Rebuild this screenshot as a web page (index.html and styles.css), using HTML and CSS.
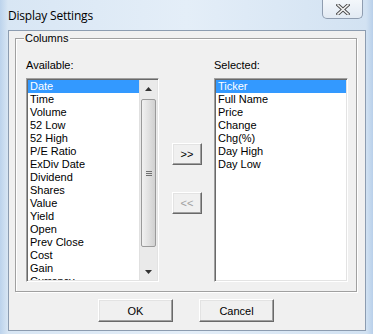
FILE: index.html
```html
<!DOCTYPE html>
<html lang="en">
<head>
  <meta charset="UTF-8">
  <title>Display Settings</title>
  <link rel="stylesheet" href="styles.css">
</head>
<body>
  <div class="frame">
    <div class="titlebar">
      <span class="title">Display Settings</span>
      <div class="close-btn">
        <svg width="14" height="11" viewBox="0 0 14 11">
          <path d="M2 1 L12 10 M12 1 L2 10" stroke="#4a4a4a" stroke-width="3.4" stroke-linecap="square"/>
          <path d="M2 1 L12 10 M12 1 L2 10" stroke="#f4f4f4" stroke-width="1.6" stroke-linecap="square"/>
        </svg>
      </div>
    </div>

    <div class="client">
      <div class="group">
        <span class="legend">Columns</span>
        <div class="columns">
          <div class="col">
            <div class="label">Available:</div>
            <div class="listbox left">
              <ul class="items">
                <li class="selected">Date</li>
                <li>Time</li>
                <li>Volume</li>
                <li>52 Low</li>
                <li>52 High</li>
                <li>P/E Ratio</li>
                <li>ExDiv Date</li>
                <li>Dividend</li>
                <li>Shares</li>
                <li>Value</li>
                <li>Yield</li>
                <li>Open</li>
                <li>Prev Close</li>
                <li>Cost</li>
                <li>Gain</li>
                <li>Currency</li>
              </ul>
              <div class="scrollbar">
                <div class="arrow">
                  <svg width="7" height="4" viewBox="0 0 7 4"><path d="M3.5 0 L7 4 L0 4 Z" fill="#333"/></svg>
                </div>
                <div class="track">
                  <div class="thumb">
                    <span class="grip"></span>
                    <span class="grip"></span>
                    <span class="grip"></span>
                  </div>
                </div>
                <div class="arrow">
                  <svg width="7" height="4" viewBox="0 0 7 4"><path d="M0 0 L7 0 L3.5 4 Z" fill="#333"/></svg>
                </div>
              </div>
            </div>
          </div>

          <div class="movers">
            <button class="btn small">&gt;&gt;</button>
            <button class="btn small" disabled>&lt;&lt;</button>
          </div>

          <div class="col">
            <div class="label">Selected:</div>
            <div class="listbox">
              <ul class="items">
                <li class="selected">Ticker</li>
                <li>Full Name</li>
                <li>Price</li>
                <li>Change</li>
                <li>Chg(%)</li>
                <li>Day High</li>
                <li>Day Low</li>
              </ul>
            </div>
          </div>
        </div>
      </div>

      <div class="actions">
        <button class="btn wide">OK</button>
        <button class="btn wide">Cancel</button>
      </div>
    </div>
  </div>
</body>
</html>
```

FILE: styles.css
```css
html, body {
  margin: 0;
  padding: 0;
}

body {
  width: 373px;
  height: 334px;
  overflow: hidden;
  font-family: "Liberation Sans", Arial, sans-serif;
  font-size: 11px;
  color: #000;
}

.frame {
  width: 373px;
  height: 334px;
  box-sizing: border-box;
  padding: 0 7px 3px 8px;
  background:
    linear-gradient(to right, #bcd3ec 0, #d8e6f4 8px, #e4eef8 50%, #d2e2f2 366px, #b9d0ea 373px);
  display: flex;
  flex-direction: column;
}

.titlebar {
  height: 31px;
  display: flex;
  align-items: flex-start;
}

.title {
  font-family: "Open Sans", "Noto Sans", sans-serif;
  font-size: 12px;
  line-height: 16px;
  margin-top: 8px;
  color: #000;
  letter-spacing: -0.2px;
}

.close-btn {
  margin-left: auto;
  margin-right: 3px;
  width: 41px;
  height: 19px;
  box-sizing: border-box;
  border: 1px solid #8f9db0;
  border-top: none;
  border-radius: 0 0 5px 5px;
  background: linear-gradient(to bottom, #f3f7fb, #e2eaf3);
  display: flex;
  align-items: center;
  justify-content: center;
}

.client {
  flex: 1;
  background: #f0f0f0;
  border: 1px solid #8c9cb0;
  padding: 7px 8px 8px 6px;
  display: flex;
  flex-direction: column;
}

.group {
  position: relative;
  height: 254px;
  box-sizing: border-box;
  border: 1px solid #a0a0a0;
  box-shadow: inset 1px 1px 0 #fff, 1px 1px 0 #fff;
  padding: 20px 9px 9px 10px;
}

.legend {
  position: absolute;
  top: -7px;
  left: 8px;
  padding: 0 2px 0 1px;
  background: #f0f0f0;
  line-height: 13px;
}

.columns {
  display: flex;
  align-items: flex-start;
}

.label {
  line-height: 13px;
  margin-bottom: 6px;
}

.listbox {
  width: 134px;
  height: 204px;
  box-sizing: border-box;
  background: #fff;
  border-top: 1px solid #a0a0a0;
  border-left: 1px solid #a0a0a0;
  border-right: 1px solid #fff;
  border-bottom: 1px solid #fff;
  box-shadow: inset 1px 1px 0 #696969, inset -1px -1px 0 #e3e3e3;
  padding: 1px;
  display: flex;
  overflow: hidden;
}

.listbox.left {
  width: 133px;
}

.items {
  flex: 1;
  list-style: none;
  margin: 0;
  padding: 0;
  overflow: hidden;
}

.items li {
  height: 13px;
  line-height: 13px;
  padding-left: 2px;
  white-space: nowrap;
}

.items li.selected {
  background: #3399ff;
  color: #fff;
}

.scrollbar {
  width: 17px;
  display: flex;
  flex-direction: column;
  background: #eaeaea;
  border-left: 1px solid #e0e0e0;
}

.arrow {
  height: 17px;
  display: flex;
  align-items: center;
  justify-content: center;
}

.track {
  flex: 1;
  padding: 2px 1px 16px 1px;
  display: flex;
}

.thumb {
  flex: 1;
  border: 1px solid #9a9a9a;
  border-radius: 2px;
  background: linear-gradient(to right, #f1f1f1, #e1e1e1 50%, #d0d0d0);
  display: flex;
  flex-direction: column;
  align-items: center;
  justify-content: center;
  gap: 1px;
}

.grip {
  width: 6px;
  height: 1px;
  background: #707070;
}

.movers {
  width: 30px;
  margin: 84px 12px 0 13px;
  display: flex;
  flex-direction: column;
  gap: 27px;
}

.btn {
  font-family: "Liberation Sans", Arial, sans-serif;
  font-size: 11px;
  color: #000;
  background: #f0f0f0;
  border: 1px solid;
  border-color: #fff #696969 #696969 #fff;
  box-shadow: inset -1px -1px 0 #a0a0a0, inset 1px 1px 0 #e3e3e3;
  padding: 0;
  margin: 0;
  cursor: pointer;
}

.btn.small {
  width: 30px;
  height: 22px;
}

.btn:disabled {
  color: #a0a0a0;
}

.actions {
  margin-top: 7px;
  display: flex;
  justify-content: center;
  gap: 26px;
}

.btn.wide {
  width: 75px;
  height: 23px;
}
```
